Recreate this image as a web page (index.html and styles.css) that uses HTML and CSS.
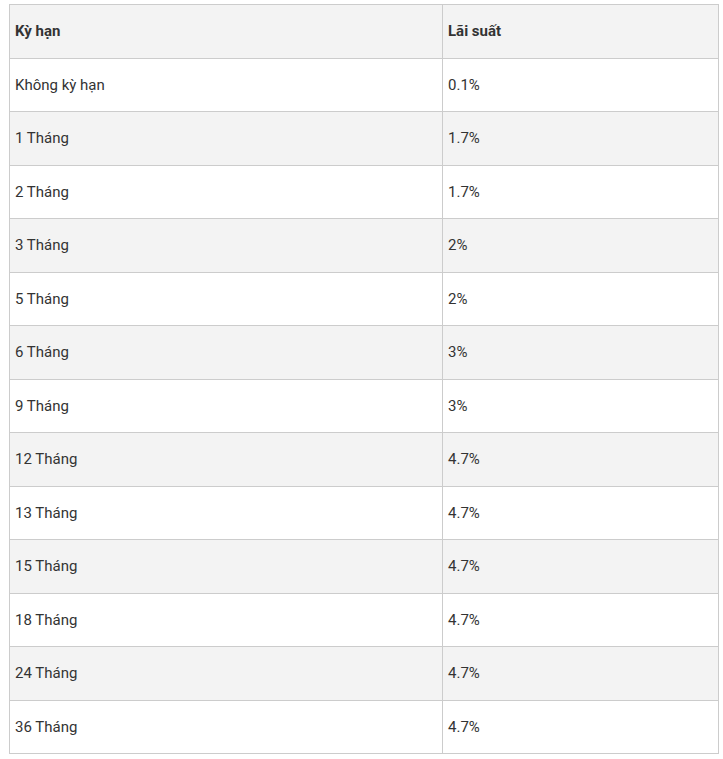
FILE: index.html
```html
<!DOCTYPE html>
<html lang="vi">
<head>
<meta charset="utf-8">
<link rel="stylesheet" href="styles.css">
</head>
<body>
<div class="wrap">
<table class="rates">
<thead>
<tr><th class="c1">Kỳ hạn</th><th class="c2">Lãi suất</th></tr>
</thead>
<tbody>
<tr><td>Không kỳ hạn</td><td>0.1%</td></tr>
<tr><td>1 Tháng</td><td>1.7%</td></tr>
<tr><td>2 Tháng</td><td>1.7%</td></tr>
<tr><td>3 Tháng</td><td>2%</td></tr>
<tr><td>5 Tháng</td><td>2%</td></tr>
<tr><td>6 Tháng</td><td>3%</td></tr>
<tr><td>9 Tháng</td><td>3%</td></tr>
<tr><td>12 Tháng</td><td>4.7%</td></tr>
<tr><td>13 Tháng</td><td>4.7%</td></tr>
<tr><td>15 Tháng</td><td>4.7%</td></tr>
<tr><td>18 Tháng</td><td>4.7%</td></tr>
<tr><td>24 Tháng</td><td>4.7%</td></tr>
<tr><td>36 Tháng</td><td>4.7%</td></tr>
</tbody>
</table>
</div>
</body>
</html>
```
FILE: styles.css
```css
html, body {
  margin: 0;
  padding: 0;
  background: #fff;
}
.wrap {
  padding: 4px 4px 0 9px;
}
.rates {
  width: 710px;
  border-collapse: collapse;
  font-family: Roboto, "Noto Sans", Arial, sans-serif;
  font-size: 15px;
  color: #333;
}
.rates th, .rates td {
  border: 1px solid #cccccc;
  height: 53.5px;
  box-sizing: border-box;
  padding: 0 5px;
  text-align: left;
  vertical-align: middle;
  line-height: 20px;
}
.rates th {
  font-weight: bold;
  background: #f3f3f3;
}
.rates .c1 {
  width: 433px;
}
.rates tbody tr:nth-child(even) td {
  background: #f3f3f3;
}
```
